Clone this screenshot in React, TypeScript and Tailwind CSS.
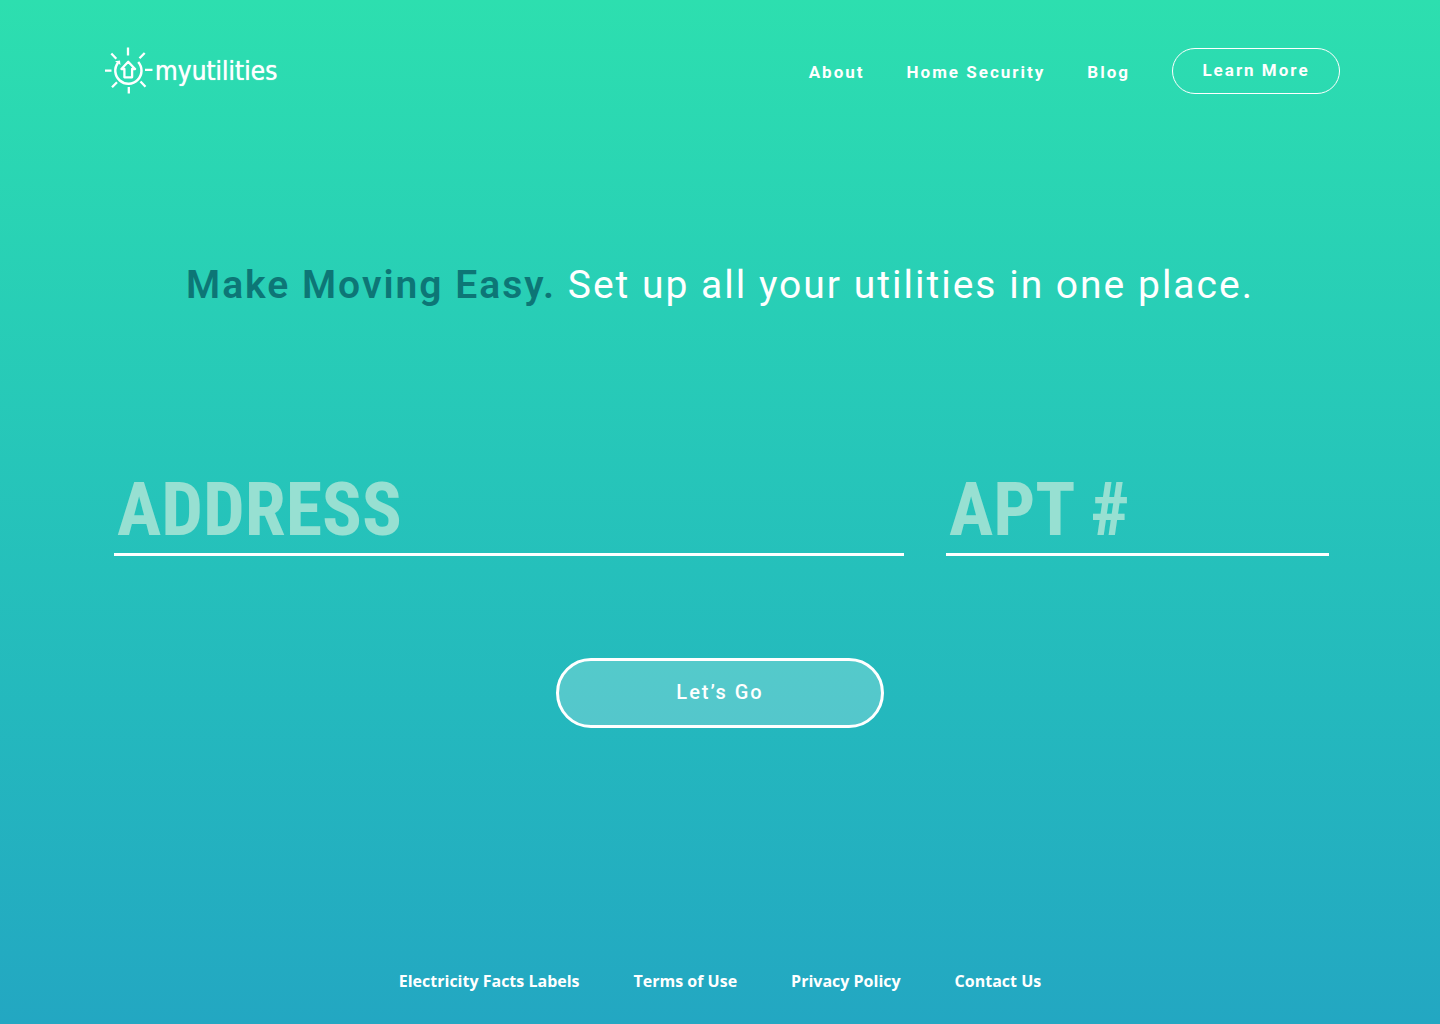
import type { ReactNode } from "react";

const navLinks = ["About", "Home Security", "Blog"];

const footerLinks = ["Electricity Facts Labels", "Terms of Use", "Privacy Policy", "Contact Us"];

const Logo = () => (
  <a href="#" className="flex items-center text-white" aria-label="myutilities">
    <svg width="50" height="48" viewBox="0 0 50 48" fill="none" stroke="currentColor" strokeWidth="2.3">
      {/* Rays */}
      <path d="M23 .5v8M23.800 40v6.500M0 23.600h6.500M40 22.900h7.500M6.300 6.500l5 5.300M39.700 6l-5.200 5.300M7 40.300l5-5M40.500 39.800l-5-5.300" />
      {/* Ring, open at the top */}
      <path d="M13 15.700A13.100 13.100 0 1 0 33.200 15" strokeWidth="2.500" />
      <path d="M10 14.300l5-.8.500 4.500z" fill="currentColor" stroke="none" />
      {/* House */}
      <path d="M23.200 14.800l-6.800 7.200h3v8.300h7.700v-8.300h3z" strokeWidth="2.300" strokeLinejoin="round" />
    </svg>
    <span className="font-['DejaVu_Sans_Condensed','Noto_Sans',sans-serif] text-[26px] leading-8 [text-shadow:0_0_1px_#fff]">
      myutilities
    </span>
  </a>
);

const Field = ({ id, label }: { id: string; label: string }) => (
  <div className="min-w-0 border-b-3 border-white">
    <input
      id={id}
      type="text"
      aria-label={label}
      placeholder={label}
      className="block h-[94px] w-full bg-transparent px-[3px] pt-1.5 font-['Roboto_Condensed','Roboto',sans-serif] text-[74px] font-bold text-white outline-none placeholder:text-[#97e0d2]"
    />
  </div>
);

const FooterLink = ({ children }: { children: ReactNode }) => (
  <a href="#" className="font-['Open_Sans',sans-serif] text-base font-bold">
    {children}
  </a>
);

const App = () => {
  return (
    <div className="flex min-h-screen flex-col bg-linear-to-b from-[#2ddfaf] to-[#23a7c2] font-['Roboto',sans-serif] text-white">
      <header className="flex items-center justify-between pt-[47px] pr-[100px] pl-[105px]">
        <Logo />
        <nav className="flex items-center gap-[42px] text-[17px] font-bold tracking-[2px]">
          {navLinks.map((link) => (
            <a key={link} href="#" className="pt-1">
              {link}
            </a>
          ))}
          <button type="button" className="h-[46px] w-[168px] rounded-full border border-white">
            Learn More
          </button>
        </nav>
      </header>

      <main>
        <h1 className="pt-[166px] text-center text-[39px] leading-12 tracking-[2px]">
          <strong className="font-semibold text-[#0d7676]">Make Moving Easy.</strong> Set up all your utilities in one
          place.
        </h1>

        <form className="pt-[150px]" onSubmit={(e) => e.preventDefault()}>
          <div className="grid grid-cols-[790fr_383fr] gap-[42px] pr-[111px] pl-[114px]">
            <Field id="address" label="ADDRESS" />
            <Field id="apt" label="APT #" />
          </div>
          <button
            type="submit"
            className="mx-auto mt-[102px] block h-[70px] w-[328px] rounded-full border-3 border-white bg-white/22 pb-0.5 text-xl font-medium tracking-[2px]"
          >
            Let’s Go
          </button>
        </form>
      </main>

      <footer className="mt-auto flex justify-center gap-[54px] pb-[31px]">
        {footerLinks.map((link) => (
          <FooterLink key={link}>{link}</FooterLink>
        ))}
      </footer>
    </div>
  );
};

export default App;
